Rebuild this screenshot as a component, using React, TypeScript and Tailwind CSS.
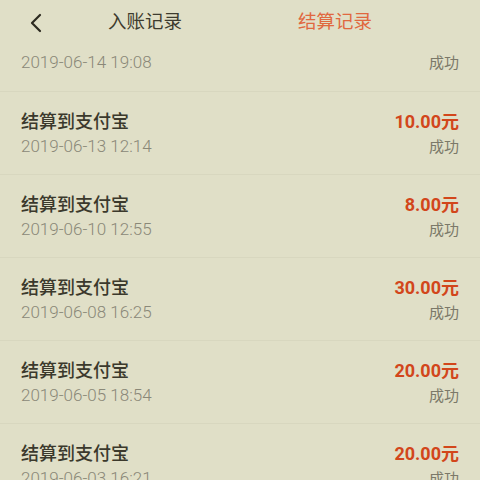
import React from "react";

const records = [
  { amount: "10.00", time: "2019-06-13 12:14" },
  { amount: "8.00", time: "2019-06-10 12:55" },
  { amount: "30.00", time: "2019-06-08 16:25" },
  { amount: "20.00", time: "2019-06-05 18:54" },
  { amount: "20.00", time: "2019-06-03 16:21" },
];

const font = { fontFamily: "Roboto, 'Noto Sans CJK SC', sans-serif" };

const Row = ({ amount, time }: { amount: string; time: string }) => (
  <div className="h-[83px] shrink-0 border-b border-[#d8d7bf] px-[21px] pt-[16px]">
    <div className="flex items-center justify-between h-[26px]">
      <span className="text-[18px] font-medium text-[#3b392c]">结算到支付宝</span>
      <span className="text-[18px] font-bold text-[#d2461b]">{amount}元</span>
    </div>
    <div className="flex items-center justify-between h-[26px]">
      <span className="text-[17px] font-light text-[#8a8878]">{time}</span>
      <span className="text-[15px] text-[#7b7969]">成功</span>
    </div>
  </div>
);

export default function App() {
  return (
    <div className="w-[480px] h-[480px] overflow-hidden bg-[#e0dfc7] flex flex-col" style={font}>
      <header className="h-[46px] shrink-0 flex items-center">
        <div className="w-[72px] flex justify-center">
          <svg width="14" height="20" viewBox="0 0 14 20">
            <path d="M11 2 L3 10 L11 18" fill="none" stroke="#2c2a20" strokeWidth="2.2" strokeLinecap="round" strokeLinejoin="round" />
          </svg>
        </div>
        <div className="flex-1 flex">
          <div className="w-[146px] flex justify-center text-[18.5px] text-[#3d3b2e]">入账记录</div>
          <div className="w-[44px]" />
          <div className="w-[146px] flex justify-center text-[18.5px] text-[#e0683f]">结算记录</div>
        </div>
      </header>
      <div className="h-[46px] shrink-0 border-b border-[#d8d7bf] px-[21px]">
        <div className="flex items-center justify-between h-[34px]">
          <span className="text-[17px] font-light text-[#8a8878]">2019-06-14 19:08</span>
          <span className="text-[15px] text-[#7b7969]">成功</span>
        </div>
      </div>
      {records.map((r, i) => (
        <Row key={i} amount={r.amount} time={r.time} />
      ))}
    </div>
  );
}
